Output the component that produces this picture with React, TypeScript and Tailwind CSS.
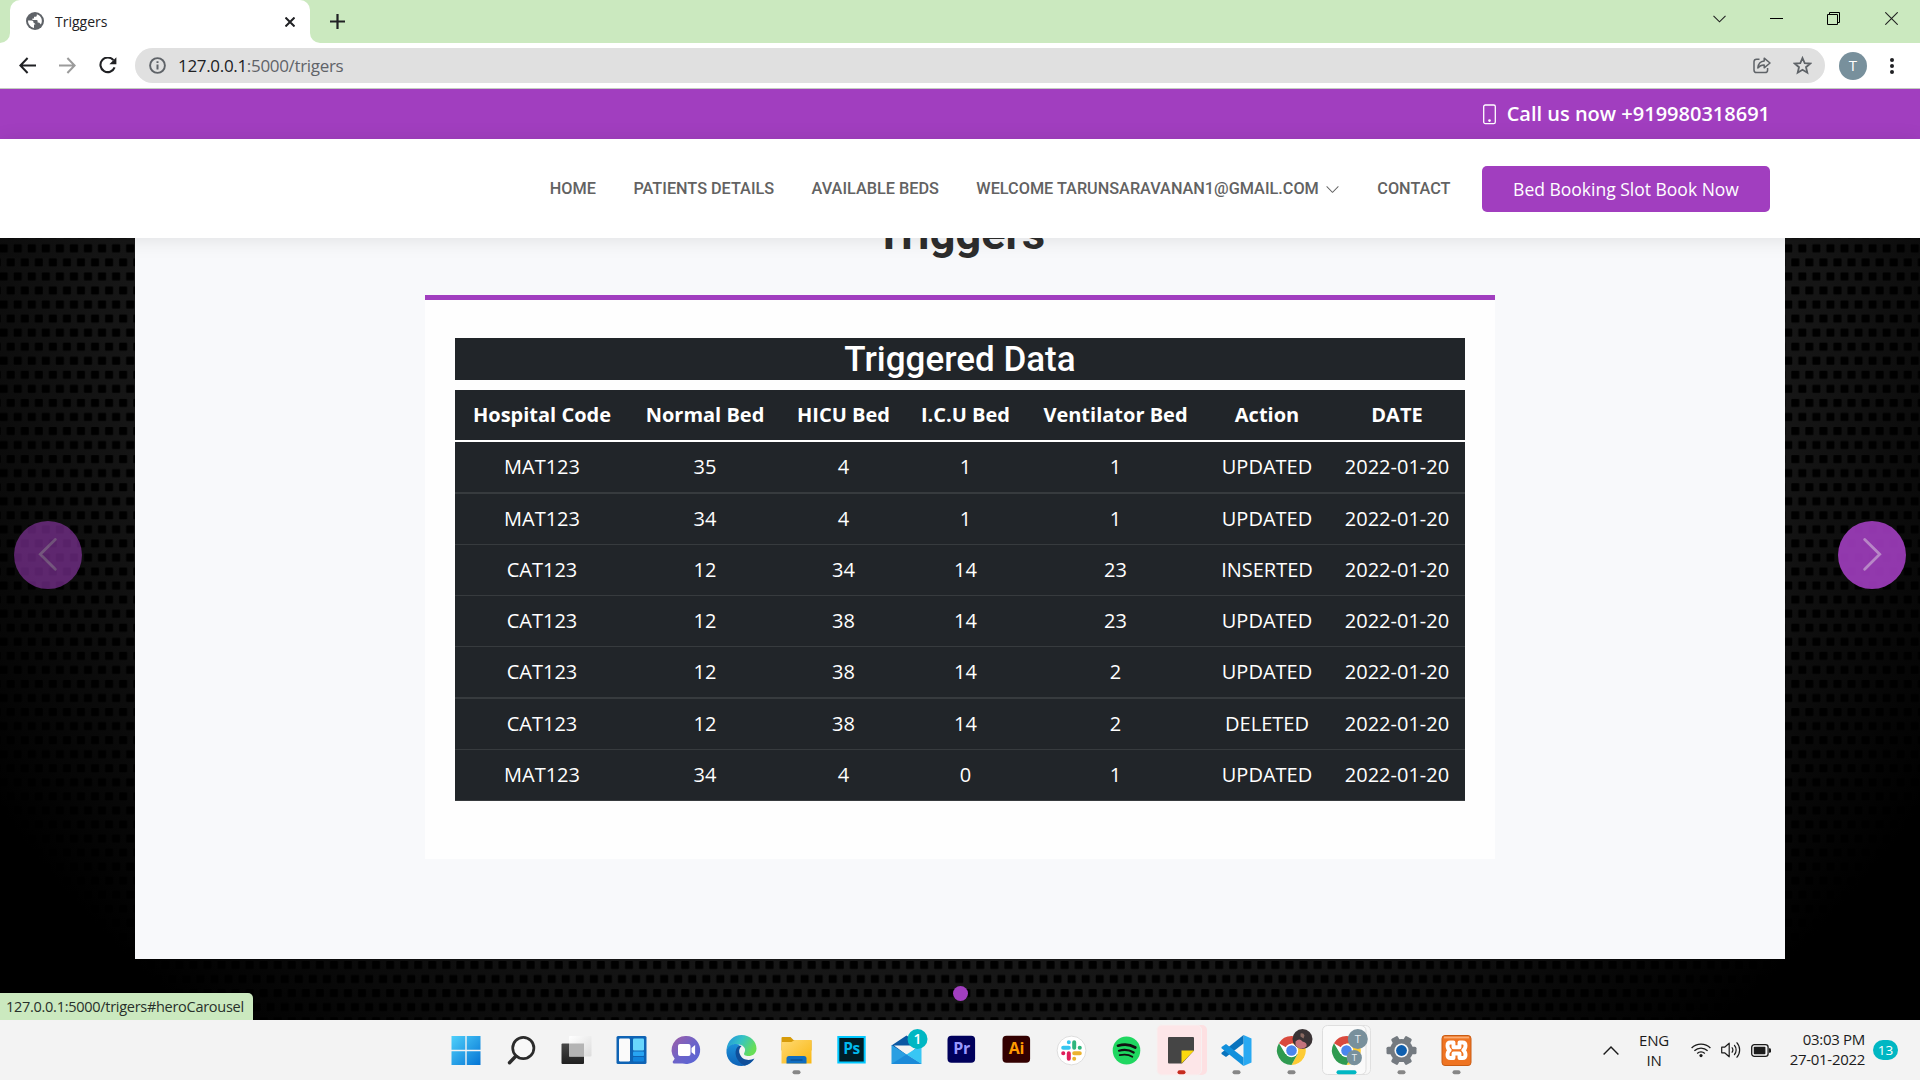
import type { ReactNode } from "react";

const columns = [
  "Hospital Code",
  "Normal Bed",
  "HICU Bed",
  "I.C.U Bed",
  "Ventilator Bed",
  "Action",
  "DATE",
];

const rows: string[][] = [
  ["MAT123", "35", "4", "1", "1", "UPDATED", "2022-01-20"],
  ["MAT123", "34", "4", "1", "1", "UPDATED", "2022-01-20"],
  ["CAT123", "12", "34", "14", "23", "INSERTED", "2022-01-20"],
  ["CAT123", "12", "38", "14", "23", "UPDATED", "2022-01-20"],
  ["CAT123", "12", "38", "14", "2", "UPDATED", "2022-01-20"],
  ["CAT123", "12", "38", "14", "2", "DELETED", "2022-01-20"],
  ["MAT123", "34", "4", "0", "1", "UPDATED", "2022-01-20"],
];

const rowHeights = [
  "h-[52px] border-b-2",
  "h-[51px] border-b",
  "h-[51px] border-b",
  "h-[51px] border-b",
  "h-[52px] border-b-2",
  "h-[51px] border-b",
  "h-[51px] border-b",
];

/* ---------- Browser chrome ---------- */

function TabStrip() {
  return (
    <div className="flex h-[43px] shrink-0 bg-[#cbe9bf]">
      <div className="flex w-[10px] items-end bg-white">
        <div className="h-full w-full rounded-br-[10px] bg-[#cbe9bf]" />
      </div>
      <div className="w-[300px] bg-[#cbe9bf]">
        <div className="flex h-full items-center rounded-t-[10px] bg-white pl-4">
          <svg width="18" height="18" viewBox="0 0 18 18" className="-mt-px">
            <circle cx="9" cy="9" r="9" fill="#5f6368" />
            <path
              d="M2 8.6 H5.6 Q7.6 8.6 7.6 10.4 V11 Q9.4 11 9.4 12.6 H8 V15.9 C4.4 15.2 2 12.4 2 8.6 Z M10.8 2.2 V3.4 Q10.8 4.8 9.2 4.8 H8 V6.4 H6.4 V8 H10.6 Q11.6 8 11.6 9 V10.4 Q13.6 10.2 14.2 11.8 L14.9 12.4 C17.2 8.4 15.2 3.6 10.8 2.2 Z"
              fill="#fff"
            />
          </svg>
          <span className="-mt-px ml-[11px] w-[230px] text-[14px] text-[#202124]">Triggers</span>
          <svg width="10" height="10" viewBox="0 0 10 10">
            <path d="M0.5 0.5 L9.5 9.5 M9.5 0.5 L0.5 9.5" stroke="#202124" strokeWidth="2" />
          </svg>
        </div>
      </div>
      <div className="w-[10px] bg-white">
        <div className="h-full w-full rounded-bl-[10px] bg-[#cbe9bf]" />
      </div>
      <div className="flex flex-1 items-center pl-[10px]">
        <svg width="15" height="15" viewBox="0 0 15 15">
          <path d="M7.5 0 V15 M0 7.5 H15" stroke="#202124" strokeWidth="2.2" />
        </svg>
      </div>
      <div className="flex h-[37px] items-center pr-[22px]">
        <svg width="13" height="8" viewBox="0 0 13 8" fill="none">
          <path d="M0.5 0.8 L6.5 6.8 L12.5 0.8" stroke="#222" strokeWidth="1.1" />
        </svg>
        <svg width="13" height="13" viewBox="0 0 13 13" className="ml-11">
          <path d="M0 6.5 H13" stroke="#000" />
        </svg>
        <svg width="13" height="13" viewBox="0 0 13 13" fill="none" className="ml-11">
          <path d="M0.5 2.5 H10.5 V12.5 H0.5 Z M2.5 2.5 V0.5 H12.5 V10.5 H10.5" stroke="#000" />
        </svg>
        <svg width="13" height="13" viewBox="0 0 13 13" className="ml-[45px]">
          <path d="M0.3 0.3 L12.7 12.7 M12.7 0.3 L0.3 12.7" stroke="#222" strokeWidth="1.1" />
        </svg>
      </div>
    </div>
  );
}

function Toolbar() {
  return (
    <div className="flex h-[46px] shrink-0 items-center border-b border-[#c3cbc0] bg-white pl-[19px] pr-[26px]">
      <svg width="17" height="17" viewBox="0 0 17 17" fill="none">
        <path d="M17 8.5 H1.8 M8.6 1 L1.4 8.5 L8.6 16" stroke="#202124" strokeWidth="2" />
      </svg>
      <svg width="17" height="17" viewBox="0 0 17 17" fill="none" className="ml-[23px]">
        <path d="M0 8.5 H15.2 M8.4 1 L15.6 8.5 L8.4 16" stroke="#9b9b9b" strokeWidth="2" />
      </svg>
      <svg width="18" height="17" viewBox="0 0 18 17" fill="none" className="ml-[23px]">
        <path d="M14.4 3.2 A7.3 7.3 0 1 0 15.6 10.4" stroke="#202124" strokeWidth="2.1" />
        <path d="M17.4 0.3 V7.3 H10.4 Z" fill="#202124" />
      </svg>
      <div className="ml-[18px] flex h-[35px] flex-1 items-center rounded-full bg-[#e0e0e0] pl-[14px] pr-[13px]">
        <svg width="17" height="17" viewBox="0 0 17 17" fill="none">
          <circle cx="8.5" cy="8.5" r="7.4" stroke="#5f6368" strokeWidth="1.9" />
          <path d="M8.5 7.4 V12.6 M8.5 4.2 V6.1" stroke="#5f6368" strokeWidth="2" />
        </svg>
        <span className="ml-[12px] flex-1 text-[17px] tracking-[-0.32px] text-[#5f6368]">
          <span className="text-[#202124]">127.0.0.1</span>:5000/trigers
        </span>
        <svg width="18" height="17" viewBox="0 0 18 17" fill="none" stroke="#5f6368" strokeWidth="1.5">
          <path d="M6.5 2.2 H3.6 A2.6 2.6 0 0 0 1 4.8 V13 A2.6 2.6 0 0 0 3.6 15.6 H12 A2.6 2.6 0 0 0 14.6 13 V11" />
          <path d="M11.2 1.2 L17 6 L11.2 10.8 V8 C8.3 7.9 6.6 8.8 4.8 11 C5.2 7.2 7.4 4.5 11.2 4.1 Z" strokeLinejoin="round" />
        </svg>
        <svg width="19" height="19" viewBox="0 0 19 19" fill="none" className="ml-[22px]">
          <path
            d="M9.5 2 L11.7 7.1 L17.2 7.6 L13 11.2 L14.3 16.7 L9.5 13.8 L4.7 16.7 L6 11.2 L1.8 7.6 L7.3 7.1 Z"
            stroke="#5f6368"
            strokeWidth="1.8"
          />
        </svg>
      </div>
      <div className="ml-[14px] flex size-7 items-center justify-center rounded-full bg-[#78909c] text-[15px] text-white">
        T
      </div>
      <div className="ml-[23px] flex flex-col gap-[2px]">
        <div className="size-1 rounded-full bg-[#202124]" />
        <div className="size-1 rounded-full bg-[#202124]" />
        <div className="size-1 rounded-full bg-[#202124]" />
      </div>
    </div>
  );
}

/* ---------- Web page ---------- */

function TopBar() {
  return (
    <div className="flex h-[50px] shrink-0 items-center justify-end bg-[#a13ebf] pr-[150px] text-white">
      <svg width="13" height="21" viewBox="0 0 13 21" fill="none">
        <rect x="0.7" y="1" width="11.6" height="18.6" rx="1.6" stroke="#fff" strokeWidth="1.3" />
        <circle cx="6.5" cy="16.6" r="1.3" fill="#fff" />
      </svg>
      <span className="ml-[11px] text-[20px] font-semibold">Call us now +919980318691</span>
    </div>
  );
}

function NavBar() {
  return (
    <header className="relative z-10 flex h-[99px] shrink-0 items-center justify-end bg-white pr-[150px] shadow-[0_2px_19px_rgba(0,0,0,0.1)]">
      <nav className="flex items-center gap-[37.5px] pt-[2px] font-['Roboto',sans-serif] text-[16.25px] font-medium text-[#626262]">
        <a>HOME</a>
        <a>PATIENTS DETAILS</a>
        <a>AVAILABLE BEDS</a>
        <a className="flex items-center">
          WELCOME TARUNSARAVANAN1@GMAIL.COM
          <svg width="15" height="15" viewBox="0 0 16 16" fill="#626262" className="-mt-px ml-[6px]">
            <path d="M1.646 4.646a.5.5 0 0 1 .708 0L8 10.293l5.646-5.647a.5.5 0 0 1 .708.708l-6 6a.5.5 0 0 1-.708 0l-6-6a.5.5 0 0 1 0-.708z" />
          </svg>
        </a>
        <a>CONTACT</a>
      </nav>
      <button className="ml-[31.5px] h-[46px] w-[288px] rounded-[5px] bg-[#a13ebf] pt-[2px] text-[17.5px] text-white">
        Bed Booking Slot Book Now
      </button>
    </header>
  );
}

function Backdrop() {
  return (
    <svg className="absolute inset-0" width="1920" height="782" viewBox="0 238 1920 782">
      <defs>
        <radialGradient
          id="glow"
          gradientUnits="userSpaceOnUse"
          cx="0"
          cy="0"
          r="1"
          gradientTransform="translate(960 239) scale(1145 1045)"
        >
          <stop offset="0" stopColor="#1a1a1a" />
          <stop offset="0.65" stopColor="#191919" />
          <stop offset="0.75" stopColor="#151515" />
          <stop offset="0.9" stopColor="#080808" />
          <stop offset="1" stopColor="#000" />
        </radialGradient>
        <pattern id="mesh" patternUnits="userSpaceOnUse" x="3.68" y="480.3" width="14.052" height="28.104">
          <rect x="3.03" y="3" width="8" height="8" rx="0.8" fill="#000" />
          <rect x="-4" y="17.05" width="8" height="8" rx="0.8" fill="#000" />
          <rect x="10.05" y="17.05" width="8" height="8" rx="0.8" fill="#000" />
        </pattern>
      </defs>
      <rect y="238" width="1920" height="782" fill="url(#glow)" />
      <rect y="238" width="1920" height="782" fill="url(#mesh)" />
    </svg>
  );
}

function TriggerTable() {
  return (
    <table className="mt-[10px] w-full table-fixed border-separate border-spacing-0 bg-[#212529] text-center text-[20px] leading-[30px] text-white">
      <colgroup>
        <col className="w-[173px]" />
        <col className="w-[153px]" />
        <col className="w-[124px]" />
        <col className="w-[120px]" />
        <col className="w-[180px]" />
        <col className="w-[123px]" />
        <col className="w-[137px]" />
      </colgroup>
      <thead>
        <tr>
          {columns.map((c) => (
            <th key={c} className="h-[52px] border-b-2 border-white p-0 pl-px font-bold">
              {c}
            </th>
          ))}
        </tr>
      </thead>
      <tbody>
        {rows.map((row, i) => (
          <tr key={i}>
            {row.map((cell, j) => (
              <td key={j} className={`${rowHeights[i]} border-[#373b3e] p-0 pl-px`}>
                {cell}
              </td>
            ))}
          </tr>
        ))}
      </tbody>
    </table>
  );
}

function CarouselArrow({ side }: { side: "left" | "right" }) {
  const left = side === "left";
  return (
    <div
      className={`absolute top-[283px] flex size-[68px] items-center justify-center rounded-full bg-[#a13ebf] ${
        left ? "left-[14px] opacity-55" : "right-[14px] opacity-90"
      }`}
    >
      <svg width="34" height="34" viewBox="0 0 34 34" fill="none" className={left ? "" : "-scale-x-100"}>
        <path d="M24.3 1.5 L9.3 16.3 L24.3 31.2" stroke="#fff" strokeOpacity="0.45" strokeWidth="2.8" strokeLinecap="round" />
      </svg>
    </div>
  );
}

function Page() {
  return (
    <main className="relative h-[782px] shrink-0 overflow-hidden bg-black">
      <Backdrop />
      <section className="relative mx-[135px] h-[721px] bg-[#f8f9fb]">
        <div className="flex flex-col items-center">
          <h1 className="-mt-[34px] font-['Roboto',sans-serif] text-[45px] font-bold leading-[60px] text-[#2d2d2d]">
            Triggers
          </h1>
          <div className="mt-[31px] h-[564px] w-[1070px] border-t-[5px] border-[#a13ebf] bg-[#fefefe] px-[30px] pt-[38px]">
            <h2 className="h-[42px] bg-[#212529] text-center font-['Roboto',sans-serif] text-[35px] font-medium leading-[44px] text-white">
              Triggered Data
            </h2>
            <TriggerTable />
          </div>
        </div>
      </section>
      <CarouselArrow side="left" />
      <CarouselArrow side="right" />
      <div className="absolute left-[953px] top-[748px] size-[15px] rounded-full bg-[#a13ebf]" />
      <div className="absolute bottom-0 left-0 h-[27px] w-[253px] whitespace-nowrap rounded-tr-[5px] bg-[#cbe9bf] pl-[6px] text-[14.5px] leading-[27px] tracking-[-0.28px] text-[#28302a]">
        127.0.0.1:5000/trigers#heroCarousel
      </div>
    </main>
  );
}

/* ---------- Taskbar icons, centred in 55px cells ---------- */

function Cell({ children, mark }: { children: ReactNode; mark?: "idle" | "alert" | "active" }) {
  return (
    <div className="w-[55px]">
      <svg width="55" height="60" viewBox="-27.5 -30.5 55 60" className="block overflow-visible">
        {children}
        {mark === "idle" && <rect x="-4" y="19.7" width="8" height="4" rx="2" fill="#868686" />}
        {mark === "alert" && <rect x="-4" y="19.7" width="8" height="4" rx="2" fill="#c62b1f" />}
        {mark === "active" && <rect x="-10" y="19.7" width="20" height="4" rx="2" fill="#00b7c3" />}
      </svg>
    </div>
  );
}

function ChromeLogo() {
  return (
    <g>
      <circle r="14.5" fill="#fff" />
      <path d="M0 0 L-12.56 -7.25 A14.5 14.5 0 0 1 12.56 -7.25 L0 -7 Z" fill="#d94a3e" />
      <path d="M0 -7 H12.56 A14.5 14.5 0 0 1 0 14.5 L6.1 3.5 Z" fill="#fdcb35" />
      <path d="M-12.56 -7.25 A14.5 14.5 0 0 0 0 14.5 L6.1 3.5 L-6.1 3.5 Z" fill="#2f9a50" />
      <circle r="6.7" fill="#fff" />
      <circle r="5.3" fill="#4a86ee" />
    </g>
  );
}

function TaskIcons() {
  return (
    <div className="flex">
      <Cell>
        <defs>
          <linearGradient id="win" x1="0" y1="0" x2="1" y2="1">
            <stop offset="0" stopColor="#4fd0fb" />
            <stop offset="1" stopColor="#0474d4" />
          </linearGradient>
        </defs>
        <path d="M-15 -14.5 H-1.2 V-0.7 H-15 Z M0.2 -14.5 H14 V-0.7 H0.2 Z M-15 0.7 H-1.2 V14.5 H-15 Z M0.2 0.7 H14 V14.5 H0.2 Z" fill="url(#win)" />
      </Cell>
      <Cell>
        <circle cx="1.8" cy="-2.5" r="10.6" fill="#f8f8f8" stroke="#2b2b2b" strokeWidth="2.7" />
        <path d="M-5.8 5.8 L-12 12.2" stroke="#2b2b2b" strokeWidth="3.4" strokeLinecap="round" />
      </Cell>
      <Cell>
        <defs>
          <linearGradient id="tv" x1="0" y1="0" x2="0" y2="1">
            <stop offset="0" stopColor="#474747" />
            <stop offset="1" stopColor="#1f1f1f" />
          </linearGradient>
          <linearGradient id="tv2" x1="0" y1="0" x2="1" y2="1">
            <stop offset="0" stopColor="#fff" />
            <stop offset="1" stopColor="#dcdcdc" />
          </linearGradient>
        </defs>
        <rect x="-15" y="-7" width="22.5" height="20.5" rx="1" fill="url(#tv)" />
        <rect x="-7.5" y="-14.5" width="22.5" height="20.5" rx="1" fill="url(#tv2)" />
        <rect x="-7.5" y="-7" width="15" height="13" fill="#b4b4b4" />
      </Cell>
      <Cell>
        <rect x="-15" y="-14.5" width="30" height="28" rx="1.5" fill="#0e63b4" />
        <rect x="-12.5" y="-12" width="11" height="23" rx="1.2" fill="#fafafa" />
        <rect x="1.5" y="-12" width="11" height="12" rx="1" fill="#69d6fc" />
        <rect x="1.5" y="1" width="11" height="4.5" rx="0.8" fill="#28a4f2" />
        <rect x="1.5" y="6.5" width="11" height="4.5" rx="0.8" fill="#1183dc" />
      </Cell>
      <Cell>
        <defs>
          <linearGradient id="chat" x1="0" y1="0" x2="1" y2="1">
            <stop offset="0" stopColor="#a25ea5" />
            <stop offset="0.5" stopColor="#6d63c8" />
            <stop offset="1" stopColor="#5565d8" />
          </linearGradient>
        </defs>
        <path d="M0 -14.5 A14 14 0 1 1 -4 13 H-13 L-14 11.5 L-11.8 8.2 A14 14 0 0 1 0 -14.5 Z" fill="url(#chat)" />
        <rect x="-8.5" y="-6.5" width="12.5" height="12" rx="2" fill="#fff" />
        <path d="M5 -2.5 L8.6 -5.4 V4.6 L5 1.8 Z" fill="#fff" />
      </Cell>
      <Cell>
        <defs>
          <linearGradient id="edgeTop" x1="0" y1="0" x2="1" y2="0.45">
            <stop offset="0.1" stopColor="#2497dc" />
            <stop offset="0.5" stopColor="#35c3c4" />
            <stop offset="1" stopColor="#67de56" />
          </linearGradient>
          <linearGradient id="edgeLow" x1="0" y1="0" x2="0" y2="1">
            <stop offset="0" stopColor="#1c90d8" />
            <stop offset="1" stopColor="#0d62b7" />
          </linearGradient>
        </defs>
        <path d="M-15 -1 C-14 -10 -8 -15.5 0 -15.5 C9 -15.5 15 -9 15 -2 C15 3 11 5.5 7 5.5 C4 5.5 1.5 4.5 3 2 C5 -2 2 -5 -2 -6 C-7 -7 -12 -5 -15 -1 Z" fill="url(#edgeTop)" />
        <path d="M-15 -1 C-12 -6.5 -5 -7.5 -1.5 -5.5 C-6 -2 -5 5 0 9 C4 11.5 9 11 12.6 8.5 C10 12.5 6 15.5 0 15.5 C-9 15.5 -16 9 -15 -1 Z" fill="url(#edgeLow)" />
        <path d="M-4 -3.5 C-8 1 -6 11 3 15 C7 14 11 11 13 8 C8 10.5 1 10 -1.5 4 C-3 1 -2.5 -2 0 -4.5 C-1.4 -5 -3 -4.6 -4 -3.5 Z" fill="#104f9a" />
      </Cell>
      <Cell mark="idle">
        <defs>
          <linearGradient id="dir" x1="0" y1="0" x2="1" y2="1">
            <stop offset="0" stopColor="#ffd972" />
            <stop offset="1" stopColor="#f9b711" />
          </linearGradient>
        </defs>
        <path d="M-15 -12.5 Q-15 -13.5 -14 -13.5 H-6 L-3 -10.5 H14 Q15 -10.5 15 -9.5 V0 H-15 Z" fill="#d79b09" />
        <path d="M-15 -8.5 H-5 L-2 -10.5 H15 V13 H-15 Z" fill="url(#dir)" />
        <path d="M-10 13 V8 Q-10 5.5 -7.5 5.5 H7.5 Q10 5.5 10 8 V13 Z" fill="#0f6dc0" />
        <path d="M-6 9.5 H6" stroke="#0a4a8a" strokeWidth="1.2" />
      </Cell>
      <Cell>
        <rect x="-14.2" y="-14.5" width="28.4" height="27.5" fill="#00c8ff" />
        <rect x="-12.2" y="-12.5" width="24.4" height="23.5" fill="#001d26" />
        <text x="0" y="3.8" textAnchor="middle" fontSize="15.5" fontWeight="700" letterSpacing="-0.4" fill="#00b9ee">Ps</text>
      </Cell>
      <Cell>
        <path d="M-15 -5 L0 -15 L15 -5 L0 5 Z" fill="#0b57a2" />
        <path d="M-12.5 -5 H12.5 L1 5 Z" fill="#f3f3f3" />
        <path d="M-15 -5.5 L15 13.5 H-15 Z" fill="#2a9fe2" />
        <path d="M15 -5.5 L0 4 L15 13.5 Z" fill="#38c6f4" />
        <path d="M0 4 L15 13.5 H-15 Z" fill="#1b8ad8" />
        <circle cx="11" cy="-11.5" r="10" fill="#00b7c3" />
        <text x="11" y="-6.3" textAnchor="middle" fontSize="14" fontWeight="600" fill="#fff">1</text>
      </Cell>
      <Cell>
        <rect x="-14" y="-14.7" width="27.6" height="27" rx="4" fill="#00005b" />
        <text x="0" y="3.8" textAnchor="middle" fontSize="16" fontWeight="700" letterSpacing="-0.3" fill="#9999ff">Pr</text>
      </Cell>
      <Cell>
        <rect x="-14" y="-14.7" width="27.6" height="27" rx="4" fill="#330000" />
        <text x="0" y="3.8" textAnchor="middle" fontSize="16" fontWeight="700" letterSpacing="-0.3" fill="#ff9a00">Ai</text>
      </Cell>
      <Cell>
        <circle r="14.4" fill="#fff" stroke="#d5d5d5" strokeWidth="0.8" />
        <g strokeWidth="4" strokeLinecap="round">
          <path d="M-2.7 -8.3 V-8.2 M-8.3 -2.7 H-2.7" stroke="#36c5f0" />
          <path d="M2.7 -8.3 V-2.7 M8.3 -2.7 H8.2" stroke="#2eb67d" />
          <path d="M2.7 2.7 H8.3 M2.7 8.3 V8.2" stroke="#ecb22e" />
          <path d="M-2.7 2.7 V8.3 M-8.3 2.7 H-8.2" stroke="#e01e5a" />
        </g>
      </Cell>
      <Cell>
        <ellipse rx="13.8" ry="14" fill="#1fd760" />
        <g fill="none" stroke="#111" strokeLinecap="round">
          <path d="M-8.5 -4.8 C-3 -6.5 4 -6 8.8 -3" strokeWidth="2.7" />
          <path d="M-7.5 0.2 C-2.5 -1.2 3 -0.6 7.2 2" strokeWidth="2.2" />
          <path d="M-6.8 4.6 C-2 3.6 2.4 4 5.8 6.2" strokeWidth="1.8" />
        </g>
      </Cell>
      <Cell mark="alert">
        <rect x="-24.5" y="-25.5" width="50" height="50" rx="5" fill="#fde0e2" />
        <rect x="-24.5" y="-25.5" width="44.5" height="50" rx="5" fill="#fde6e8" stroke="#f7f0f0" />
        <path d="M-12.5 -13.5 H11.5 Q12.5 -13.5 12.5 -12.5 V0 L0.5 13 H-12.5 Q-13.5 13 -13.5 12 V-12.5 Q-13.5 -13.5 -12.5 -13.5 Z" fill="#454545" />
        <path d="M0 0 H12.5 L0 13 Z" fill="#fcd90d" />
      </Cell>
      <Cell mark="idle">
        <path d="M7 -15.5 L15 -12 V12 L7 15.5 Z" fill="#28a9f2" />
        <path d="M7 -15.5 V-7 L-10.5 6.6 L-15 3.5 V2.2 Z" fill="#0873bd" />
        <path d="M7 15.5 V7 L-10.5 -6.6 L-15 -3.5 V-2.2 Z" fill="#1190dc" />
      </Cell>
      <Cell mark="idle">
        <ChromeLogo />
        <circle cx="11" cy="-11.5" r="10" fill="#3a3335" />
        <path d="M4 -9 Q8 -13 11 -9 Q16 -8 15 -4 Q9 1 4 -5 Z" fill="#c4737c" />
        <path d="M9 -17 Q12 -18 13 -15 L12 -12 L9 -14 Z" fill="#8a6a62" />
      </Cell>
      <Cell mark="active">
        <rect x="-20" y="-25" width="44" height="49" rx="5" fill="#f8f8f8" stroke="#e0e0e0" />
        <rect x="-24" y="-25" width="43.5" height="49" rx="5" fill="#fafafa" stroke="#dedede" />
        <ChromeLogo />
        <circle cx="11.3" cy="-11.5" r="10" fill="#78909c" />
        <text x="11.3" y="-7.5" textAnchor="middle" fontSize="11" fill="#e8edf0">T</text>
        <circle cx="7.8" cy="7.2" r="7.6" fill="#78909c" />
        <text x="7.8" y="10.7" textAnchor="middle" fontSize="9.5" fill="#e8edf0">T</text>
      </Cell>
      <Cell mark="idle">
        <g fill="#747a80">
          <circle r="11.5" />
          <rect x="-3.8" y="-15" width="7.6" height="30" rx="1.6" transform="rotate(30)" />
          <rect x="-3.8" y="-15" width="7.6" height="30" rx="1.6" transform="rotate(90)" />
          <rect x="-3.8" y="-15" width="7.6" height="30" rx="1.6" transform="rotate(150)" />
        </g>
        <circle r="7" fill="#f5f5f5" />
        <circle r="5.4" fill="#0f5fae" />
      </Cell>
      <Cell mark="idle">
        <rect x="-14.5" y="-15" width="29" height="30" rx="3" fill="#ef7422" stroke="#c95c14" />
        <path d="M-12.5 -13 H12.5" stroke="#f9ab72" strokeWidth="1.8" />
        <path
          d="M-3 -8 H-6 Q-9 -8 -9 -5 Q-9 -1.8 -6.8 -0.3 Q-9 1.2 -9 4.5 Q-9 7.5 -6 7.5 H-3 V3 H3 V7.5 H6 Q9 7.5 9 4.5 Q9 1.2 6.8 -0.3 Q9 -1.8 9 -5 Q9 -8 6 -8 H3 V-3.2 H-3 Z"
          fill="none"
          stroke="#fff"
          strokeWidth="3.9"
          strokeLinejoin="round"
        />
      </Cell>
    </div>
  );
}

function SystemTray() {
  return (
    <div className="flex h-[60px] items-center pr-[22px] text-[#1b1b1b]">
      <svg width="16" height="9" viewBox="0 0 16 9" fill="none">
        <path d="M0.6 8.4 L8 1 L15.4 8.4" stroke="#1b1b1b" strokeWidth="1.4" />
      </svg>
      <div className="ml-[19px] w-[32px] text-center text-[15px] leading-[20px] tracking-[-0.2px]">
        <div>ENG</div>
        <div>IN</div>
      </div>
      <svg width="20" height="16" viewBox="0 0 20 16" fill="none" stroke="#1b1b1b" strokeWidth="1.3" className="ml-[21px]">
        <path d="M0.6 6 A13.4 13.4 0 0 1 19.4 6 M3.4 8.8 A9.4 9.4 0 0 1 16.6 8.8 M6.2 11.5 A5.4 5.4 0 0 1 13.8 11.5" />
        <circle cx="10" cy="13.6" r="1.6" fill="#1b1b1b" stroke="none" />
      </svg>
      <svg width="20" height="18" viewBox="0 0 20 18" fill="none" stroke="#1b1b1b" strokeWidth="1.2" className="ml-[10px]">
        <path d="M0.7 6.2 H3.6 L8.2 2.2 V15.8 L3.6 11.8 H0.7 Z" strokeLinejoin="round" />
        <path d="M10.8 6.4 A4 4 0 0 1 10.8 11.6 M13.2 4 A7.4 7.4 0 0 1 13.2 14 M15.6 1.4 A11 11 0 0 1 15.6 16.6" />
      </svg>
      <svg width="20" height="13" viewBox="0 0 20 13" fill="none" className="ml-[10px]">
        <rect x="0.7" y="0.7" width="16.4" height="11.6" rx="2.6" stroke="#1b1b1b" strokeWidth="1.3" />
        <rect x="2.8" y="2.8" width="11.6" height="7.4" rx="0.8" fill="#1b1b1b" />
        <path d="M18 4.2 H18.6 Q20 4.2 20 5.6 V7.4 Q20 8.8 18.6 8.8 H18 Z" fill="#1b1b1b" />
      </svg>
      <div className="-mt-[2px] ml-[15px] w-[79px] text-right text-[15px] leading-[20px] tracking-[-0.3px]">
        <div>03:03 PM</div>
        <div>27-01-2022</div>
      </div>
      <div className="ml-[8px] flex h-[20px] w-[25px] items-center justify-center rounded-full bg-[#00b7c3] text-[13.5px] text-white">
        13
      </div>
    </div>
  );
}

function Taskbar() {
  return (
    <footer className="flex h-[60px] shrink-0 justify-between bg-[#f3f3f3] pl-[438.5px]">
      <TaskIcons />
      <SystemTray />
    </footer>
  );
}

export default function App() {
  return (
    <div className="flex h-[1080px] w-[1920px] flex-col overflow-hidden bg-white font-['Open_Sans',sans-serif]">
      <TabStrip />
      <Toolbar />
      <TopBar />
      <NavBar />
      <Page />
      <Taskbar />
    </div>
  );
}
